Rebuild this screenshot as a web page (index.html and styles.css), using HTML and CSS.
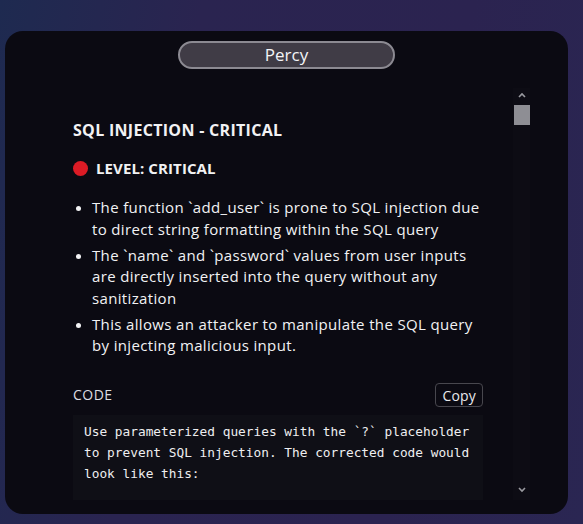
FILE: index.html
```html
<!DOCTYPE html>
<html>
<head>
<meta charset="utf-8">
<link rel="stylesheet" href="styles.css">
</head>
<body>
<div class="card">
  <div class="pill">Percy</div>
  <div class="body">
    <div class="scroll">
      <h2 class="title">SQL INJECTION - CRITICAL</h2>
      <div class="level"><span class="dot"></span>LEVEL: CRITICAL</div>
      <ul class="list">
        <li>The function `add_user` is prone to SQL injection due to direct string formatting within the SQL query</li>
        <li>The `name` and `password` values from user inputs are directly inserted into the query without any sanitization</li>
        <li>This allows an attacker to manipulate the SQL query by injecting malicious input.</li>
      </ul>
      <div class="code-head"><span class="code-label">CODE</span><button class="copy">Copy</button></div>
      <pre class="code">Use parameterized queries with the `?` placeholder
to prevent SQL injection. The corrected code would
look like this:
</pre>
    </div>
    <div class="scrollbar">
      <svg class="arrow up" width="10" height="8" viewBox="0 0 10 8"><path d="M2 6 L5 3 L8 6" fill="none" stroke="#9a9aa0" stroke-width="1.6"/></svg>
      <div class="thumb"></div>
      <div class="track"></div>
      <svg class="arrow down" width="10" height="8" viewBox="0 0 10 8"><path d="M2 2 L5 5 L8 2" fill="none" stroke="#9a9aa0" stroke-width="1.6"/></svg>
    </div>
  </div>
</div>
</body>
</html>
```
FILE: styles.css
```css
html, body { margin: 0; padding: 0; }
body {
  width: 583px;
  height: 524px;
  overflow: hidden;
  background: linear-gradient(100deg, #1e2a50 0%, #2a2450 30%, #2b2350 70%, #2a2652 100%);
  font-family: "Open Sans", sans-serif;
  color: #f2f2f4;
}
.card {
  margin: 31px 0 0 5px;
  width: 563px;
  height: 483px;
  background: #0b0a12;
  border-radius: 18px;
  box-sizing: border-box;
  padding-top: 10px;
  display: flex;
  flex-direction: column;
  align-items: center;
  overflow: hidden;
}
.pill {
  width: 213px;
  height: 24px;
  border: 2px solid #8c8a92;
  border-radius: 14px;
  background: #403c46;
  text-align: center;
  font-size: 17px;
  line-height: 24px;
  color: #f4f4f6;
}
.body {
  align-self: stretch;
  display: flex;
  margin-top: 19px;
  height: 412px;
}
.scroll {
  flex: 1;
  padding: 0 0 0 68px;
  overflow: hidden;
}
.title {
  margin: 32px 0 0 0;
  font-size: 16px;
  font-weight: 700;
  letter-spacing: 0.3px;
  line-height: 20px;
}
.level {
  margin-top: 18px;
  display: flex;
  align-items: center;
  font-size: 15px;
  font-weight: 700;
  letter-spacing: 0.1px;
  line-height: 20px;
}
.dot {
  width: 15px;
  height: 15px;
  border-radius: 50%;
  background: #dc1b25;
  margin-right: 8px;
}
.list {
  margin: 19px 0 0 0;
  padding: 0 0 0 19px;
  font-size: 15px;
  letter-spacing: 0.35px;
  line-height: 21.5px;
  width: 392px;
}
.list li { margin-bottom: 4.5px; }
.list li::marker { font-size: 13px; }
.code-head {
  margin-top: 26px;
  width: 410px;
  display: flex;
  justify-content: space-between;
  align-items: center;
}
.code-label { font-size: 14px; letter-spacing: 0.5px; color: #dedee2; }
.copy {
  font-family: inherit;
  font-size: 14px;
  letter-spacing: 0.2px;
  color: #e8e8ec;
  background: #0b0a12;
  border: 1px solid #48474e;
  border-radius: 4px;
  padding: 2px 6px;
  height: 24px;
}
.code {
  margin: 8px 0 0 0;
  width: 410px;
  box-sizing: border-box;
  background: #0f0f16;
  padding: 6px 11px 20px;
  font-family: "DejaVu Sans Mono", monospace;
  font-size: 12.8px;
  line-height: 21px;
  color: #eeeef0;
}
.scrollbar {
  width: 17px;
  margin-right: 38px;
  display: flex;
  flex-direction: column;
  align-items: center;
  background: #0d0c14;
}
.arrow.up { margin: 3px 0 6px; }
.arrow.down { margin: 2px 0 6px; }
.thumb { width: 16px; height: 20px; background: #8e8e94; }
.track { flex: 1; }
```
